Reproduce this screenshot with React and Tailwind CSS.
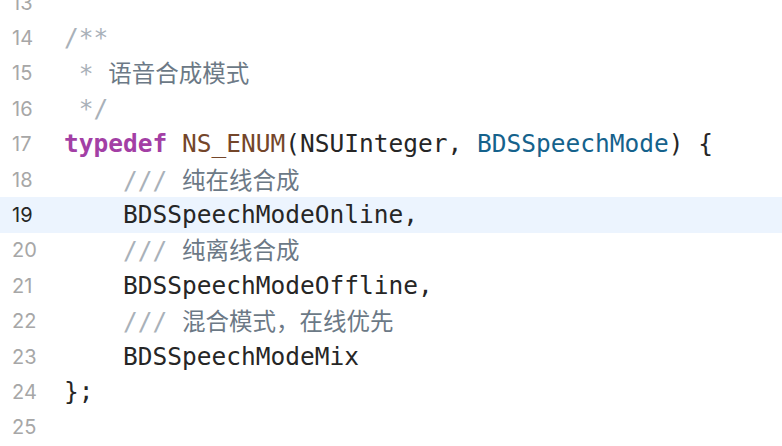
import React from "react";

const mono = "font-['DejaVu_Sans_Mono','Liberation_Mono',monospace]";
const cjk = "font-['Noto_Sans_CJK_SC',sans-serif] text-[23.5px] text-[#6c7986]";

function Mark({ children }) {
  return <span className="text-[#a9b1b9]">{children}</span>;
}

function Zh({ children }) {
  return <span className={cjk}>{children}</span>;
}

const lines = [
  { n: 13, code: null },
  { n: 14, code: <Mark>/**</Mark> },
  { n: 15, code: <><Mark> * </Mark><Zh>语音合成模式</Zh></> },
  { n: 16, code: <Mark> */</Mark> },
  {
    n: 17,
    code: (
      <>
        <span className="text-[#a33fa5] font-bold">typedef</span>{" "}
        <span className="text-[#74462a]">NS_ENUM</span>
        <span className="text-[#262626]">(NSUInteger, </span>
        <span className="text-[#15628c]">BDSSpeechMode</span>
        <span className="text-[#262626]">) {"{"}</span>
      </>
    ),
  },
  { n: 18, code: <><Mark>    /// </Mark><Zh>纯在线合成</Zh></> },
  { n: 19, code: <span className="text-[#262626]">    BDSSpeechModeOnline,</span>, active: true },
  { n: 20, code: <><Mark>    /// </Mark><Zh>纯离线合成</Zh></> },
  { n: 21, code: <span className="text-[#262626]">    BDSSpeechModeOffline,</span> },
  { n: 22, code: <><Mark>    /// </Mark><Zh>混合模式，在线优先</Zh></> },
  { n: 23, code: <span className="text-[#262626]">    BDSSpeechModeMix</span> },
  { n: 24, code: <span className="text-[#262626]">{"};"}</span> },
  { n: 25, code: null },
];

export default function App() {
  return (
    <div className="w-[782px] h-[446px] bg-white overflow-hidden">
      <div className="-mt-[15px] flex flex-col">
        {lines.map((l) => (
          <div
            key={l.n}
            className={`flex items-center h-[35.4px] ${l.active ? "bg-[#ecf4fe]" : ""}`}
          >
            <span
              className={`w-[64px] pl-[12px] shrink-0 font-['Inter',sans-serif] text-[20px] ${
                l.active ? "text-[#262626]" : "text-[#a7a7a7]"
              }`}
            >
              {l.n}
            </span>
            <span className={`${mono} text-[24.5px] whitespace-pre leading-[30px]`}>{l.code}</span>
          </div>
        ))}
      </div>
    </div>
  );
}
